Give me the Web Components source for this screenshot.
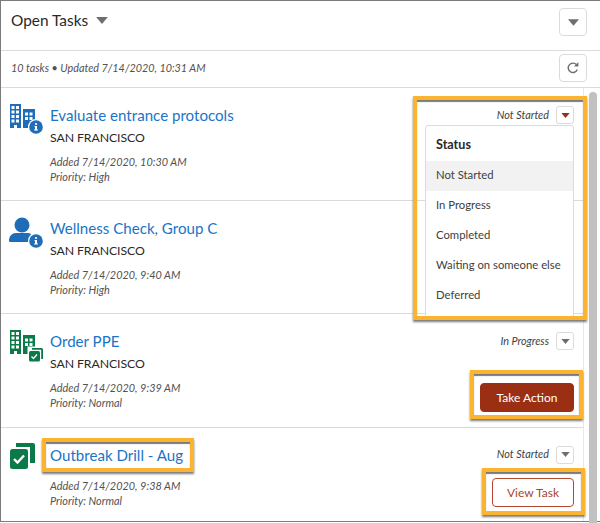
<!DOCTYPE html>
<html>
<head>
<meta charset="utf-8">
<style>
  html, body { margin: 0; height: 523px; overflow: hidden; background: #fff; }
  body { font-family: Lato, "Open Sans", sans-serif; color: #2b2826; }
</style>
</head>
<body>
<task-panel>
  <task-row>
    <task-icon slot="icon" kind="building-info"></task-icon>
    <span slot="title">Evaluate entrance protocols</span>
    <span slot="city">SAN FRANCISCO</span>
    <span slot="added">Added 7/14/2020, 10:30 AM</span>
    <span slot="priority">Priority: High</span>
    <hl-box slot="side" style="--t:-10px;--r:-13px;--b:-196px;--l:-84px">
      <status-line open>Not Started</status-line>
      <status-menu></status-menu>
    </hl-box>
  </task-row>
  <task-row>
    <task-icon slot="icon" kind="person-info"></task-icon>
    <span slot="title">Wellness Check, Group C</span>
    <span slot="city">SAN FRANCISCO</span>
    <span slot="added">Added 7/14/2020, 9:40 AM</span>
    <span slot="priority">Priority: High</span>
  </task-row>
  <task-row>
    <task-icon slot="icon" kind="building-check"></task-icon>
    <span slot="title">Order PPE</span>
    <span slot="city">SAN FRANCISCO</span>
    <span slot="added">Added 7/14/2020, 9:39 AM</span>
    <span slot="priority">Priority: Normal</span>
    <status-line slot="side">In Progress</status-line>
    <hl-box slot="action" style="--t:-13px;--r:-9px;--b:-7px;--l:-10px">
      <task-button brand>Take Action</task-button>
    </hl-box>
  </task-row>
  <task-row last>
    <task-icon slot="icon" kind="task-check"></task-icon>
    <hl-box slot="title" style="--t:-7px;--r:-11px;--b:-7px;--l:-8px">Outbreak Drill - Aug</hl-box>
    <span slot="added">Added 7/14/2020, 9:38 AM</span>
    <span slot="priority">Priority: Normal</span>
    <status-line slot="side">Not Started</status-line>
    <hl-box slot="action" style="--t:-10px;--r:-11px;--b:-8px;--l:-10px">
      <task-button>View Task</task-button>
    </hl-box>
  </task-row>
</task-panel>

<script>
const caret = (color, w, h) => `<svg width="${w}" height="${h}" viewBox="0 0 10 6"><path d="M0 0h10L5 6z" fill="${color}"/></svg>`;

class TaskPanel extends HTMLElement {
  constructor() {
    super();
    this.attachShadow({mode: "open"}).innerHTML = `
      <style>
        :host { display: flex; flex-direction: column; height: 522px; box-sizing: border-box;
          border-top: 1px solid #7b7b7b; border-left: 1px solid #7b7b7b; border-bottom: 1px solid #7b7b7b; background: #fff; }
        header { display: flex; align-items: flex-start; justify-content: space-between; height: 42px;
          padding: 7px 13px 0 10px; border-bottom: 1px solid #dddbda; flex: none; }
        .heading { display: flex; align-items: center; gap: 8px; font-size: 15.400px; line-height: 25px; color: #2b2826; }
        .sub { display: flex; align-items: center; justify-content: space-between; height: 33px;
          padding: 0 13px 3px 10px; border-bottom: 1px solid #dddbda; flex: none;
          font-size: 10.800px; font-style: italic; color: #54514f; }
        .body { display: flex; flex: 1; min-height: 0; }
        .list { width: 583px; flex: none; box-sizing: border-box; border-right: 1px solid #e8e8e8; }
        .track { flex: 1; padding: 4px 3px 0 5px; margin-bottom: -2px; }
        .thumb { width: 8px; height: 100%; background: #c1c1c1; border-radius: 4px 4px 0 0; }
        .btn { width: 26px; height: 26px; border: 1px solid #dddbda; border-radius: 4px; background: #fff;
          display: flex; align-items: center; justify-content: center; }
      </style>
      <header>
        <div class="heading">Open Tasks ${caret("#706e6b", 12, 7)}</div>
        <div class="btn">${caret("#706e6b", 11, 7)}</div>
      </header>
      <div class="sub">
        <span>10 tasks • Updated 7/14/2020, 10:31 AM</span>
        <div class="btn">
          <svg width="14" height="14" viewBox="0 0 14 14" fill="none">
            <path d="M11.300 8.600A4.700 4.700 0 1 1 10.400 3.600" stroke="#706e6b" stroke-width="1.400"/>
            <path d="M12.400 1v4.400H8z" fill="#706e6b"/>
          </svg>
        </div>
      </div>
      <div class="body">
        <div class="list"><slot></slot></div>
        <div class="track"><div class="thumb"></div></div>
      </div>`;
  }
}

class TaskRow extends HTMLElement {
  constructor() {
    super();
    this.attachShadow({mode: "open"}).innerHTML = `
      <style>
        :host { display: flex; box-sizing: border-box; padding: 16px 9px 16.200px 7px;
          border-bottom: 1px solid #dddbda; position: relative; }
        :host([last]) { border-bottom: 0; padding-bottom: 13px; }
        .ic { width: 42px; flex: none; margin-top: -1px; }
        .main { flex: 1; padding-top: 1px; }
        .title { font-size: 15.100px; line-height: 20px; color: #1a74c7; }
        .city { font-size: 12.300px; letter-spacing: -.1px; line-height: 20px; margin-top: 3px; color: #2b2826; }
        .meta { font-size: 10.900px; line-height: 15px; font-style: italic; color: #54514f; margin-top: 6px; }
        :host([last]) .city { display: none; }
        :host([last]) .meta { margin-top: 13px; }
        .side { display: flex; flex-direction: column; align-items: flex-end; margin-top: 2px; margin-bottom: -1.800px; }
        :host([last]) .side { margin-bottom: 1px; }
        .action { margin-top: auto; }
      </style>
      <div class="ic"><slot name="icon"></slot></div>
      <div class="main">
        <div class="title"><slot name="title"></slot></div>
        <div class="city"><slot name="city"></slot></div>
        <div class="meta">
          <div><slot name="added"></slot></div>
          <div><slot name="priority"></slot></div>
        </div>
      </div>
      <div class="side">
        <slot name="side"></slot>
        <div class="action"><slot name="action"></slot></div>
      </div>`;
  }
}

class HlBox extends HTMLElement {
  constructor() {
    super();
    this.attachShadow({mode: "open"}).innerHTML = `
      <style>
        :host { display: block; position: relative; width: fit-content; }
        .frame { position: absolute; top: var(--t); right: var(--r); bottom: var(--b); left: var(--l);
          border: 4px solid #fbb430; pointer-events: none; z-index: 3;
          box-shadow: 0 2px 2px rgba(50,50,50,.65), inset 0 2px 1px rgba(50,50,50,.65); }
      </style>
      <slot></slot>
      <div class="frame"></div>`;
  }
}

class StatusLine extends HTMLElement {
  constructor() {
    super();
    const color = this.hasAttribute("open") ? "#9b2f14" : "#706e6b";
    this.attachShadow({mode: "open"}).innerHTML = `
      <style>
        :host { display: flex; align-items: center; justify-content: flex-end; gap: 7px;
          font-size: 10.800px; font-style: italic; color: #3e3e3c; }
        span { padding-bottom: 2px; }
        .btn { width: 16px; height: 16px; border: 1px solid #dddbda; border-radius: 3px; background: #fff;
          display: flex; align-items: center; justify-content: center; }
      </style>
      <span><slot></slot></span>
      <div class="btn">${caret(color, 9, 5)}</div>`;
  }
}

class StatusMenu extends HTMLElement {
  constructor() {
    super();
    const items = ["Not Started", "In Progress", "Completed", "Waiting on someone else", "Deferred"];
    this.attachShadow({mode: "open"}).innerHTML = `
      <style>
        :host { display: block; position: absolute; top: 19px; right: 0; width: 147px; height: 191px;
          background: #fff; border: 1px solid #dddbda; border-radius: 3px; z-index: 2; }
        h4 { margin: 0; padding: 0 10px; height: 35px; line-height: 38px; font-size: 12.600px; font-weight: 700; color: #2b2826; }
        div { height: 30px; line-height: 28px; padding: 0 10px; font-size: 11.300px; color: #3e3e3c; white-space: nowrap; }
        div:first-of-type { background: #f2f2f2; }
      </style>
      <h4>Status</h4>
      ${items.map(t => `<div>${t}</div>`).join("")}`;
  }
}

class TaskButton extends HTMLElement {
  constructor() {
    super();
    this.attachShadow({mode: "open"}).innerHTML = `
      <style>
        :host { display: flex; align-items: center; justify-content: center; box-sizing: border-box;
          width: 82px; height: 29px; border: 1px solid #b4472d; border-radius: 4px; background: #fff;
          color: #a8452c; font-size: 12px; }
        :host([brand]) { width: 94px; background: #9b2f14; border-color: #9b2f14; color: #fff; }
      </style>
      <slot></slot>`;
  }
}

class TaskIcon extends HTMLElement {
  constructor() {
    super();
    const blue = "#1f6db8", green = "#0b7a48";
    const windows = [[3.5,3],[8,3],[3.5,7.5],[8,7.5],[3.5,12],[8,12],[3.5,16.5],[8,16.5],[17,9.5],[21.5,9.5],[17,14],[21.5,14]];
    const building = c => `
      <path d="M2 1h11v24H9v-3H6v3H2zM15 6h12v19h-4v-3h-3v3h-5z" fill="${c}"/>
      ${windows.map(([x, y]) => `<rect x="${x}" y="${y}" width="3" height="3" fill="#fff"/>`).join("")}`;
    const info = (x, y) => `
      <circle cx="${x}" cy="${y}" r="8" fill="#fff"/>
      <circle cx="${x}" cy="${y}" r="6.800" fill="${blue}"/>
      <circle cx="${x}" cy="${y - 3}" r="1.100" fill="#fff"/>
      <path d="M${x - 1.5} ${y - 1}h2.500v3.500h1v1h-4v-1h1v-2.500h-.5z" fill="#fff"/>`;
    const kinds = {
      "building-info": building(blue) + info(28, 24),
      "person-info": `<circle cx="14" cy="9" r="7.500" fill="${blue}"/>
        <path d="M1 24.500c0-4 3-7.500 7-7.500h12c3 0 5 3 5 7.500 0 1-.8 1.500-1.500 1.500H2.500C1.600 26 1 25.500 1 24.500z" fill="${blue}"/>` + info(28, 25),
      "building-check": building(green) + `
        <rect x="19.500" y="17.500" width="17" height="16" fill="#fff"/>
        <path d="M24 19h9.500a1.500 1.500 0 0 1 1.500 1.500V30h-1.800V20.800H24z" fill="${green}"/>
        <rect x="21" y="22" width="11" height="10.500" rx="1.500" fill="${green}"/>
        <path d="M23.500 27.500l2 2 3.500-4" fill="none" stroke="#fff" stroke-width="1.300"/>`,
      "task-check": `
        <path d="M8 0h17a2 2 0 0 1 2 2v18h-5V4H8z" fill="${green}"/>
        <rect x="2" y="6" width="18" height="20" rx="2.500" fill="${green}"/>
        <path d="M6 16l3.500 3.500 6.500-7" fill="none" stroke="#fff" stroke-width="2.400"/>`
    };
    this.attachShadow({mode: "open"}).innerHTML = `
      <style>:host { display: block; width: 36px; height: 36px; } svg { display: block; overflow: visible; }</style>
      <svg width="36" height="36" viewBox="0 0 36 36">${kinds[this.getAttribute("kind")]}</svg>`;
  }
}

customElements.define("task-panel", TaskPanel);
customElements.define("task-row", TaskRow);
customElements.define("hl-box", HlBox);
customElements.define("status-line", StatusLine);
customElements.define("status-menu", StatusMenu);
customElements.define("task-button", TaskButton);
customElements.define("task-icon", TaskIcon);
</script>
</body>
</html>
